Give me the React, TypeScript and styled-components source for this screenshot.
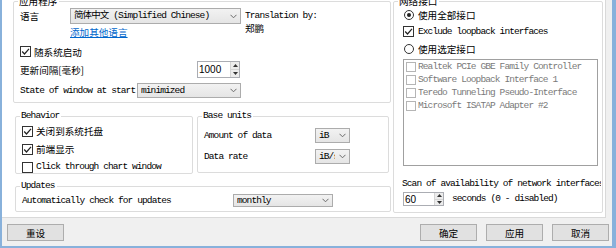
import React from "react";
import styled, { createGlobalStyle } from "styled-components";

const MONO = `"Liberation Mono", "Noto Sans CJK SC", monospace`;
const CJK = `"Noto Sans CJK SC", "Liberation Sans", sans-serif`;
const SANS = `"Liberation Sans", Arial, sans-serif`;

const GlobalStyle = createGlobalStyle`
  html, body { margin: 0; padding: 0; width: 616px; height: 248px; overflow: hidden; background: #fff; }
  * { box-sizing: border-box; }
`;

const Window = styled.div`
  width: 616px;
  height: 248px;
  background: #88b1db;
  padding: 0 4px 2px 2px;
  display: flex;
  flex-direction: column;
`;

const Client = styled.div`
  flex: 1;
  background: #f0f0f0;
  display: flex;
  flex-direction: column;
`;

const TabPage = styled.div`
  width: 604px;
  height: 218px;
  flex-shrink: 0;
  background: #fff;
  border-right: 1px solid #d9d9d9;
  border-bottom: 1px solid #d9d9d9;
  overflow: hidden;
  display: flex;
  align-items: flex-start;
  padding: 1px 0 0 11px;
  color: #000;
`;

const LeftCol = styled.div`
  width: 378px;
  display: flex;
  flex-direction: column;
  flex-shrink: 0;
`;

const GroupBox = styled.div<{ $w: number; $h: number; $ml?: number; $mt?: number }>`
  position: relative;
  width: ${(p) => p.$w}px;
  height: ${(p) => p.$h}px;
  margin-left: ${(p) => p.$ml ?? 0}px;
  margin-top: ${(p) => p.$mt ?? 0}px;
  border: 1px solid #dcdcdc;
  border-radius: 2px;
  flex-shrink: 0;
`;

const Caption = styled.span<{ $cjk?: boolean }>`
  position: absolute;
  top: -7px;
  left: 4px;
  padding: 0 2px 0 1px;
  background: #fff;
  line-height: 12px;
  white-space: nowrap;
  font-family: ${(p) => (p.$cjk ? CJK : MONO)};
  font-size: ${(p) => (p.$cjk ? "9.6px" : "9.5px")};
  letter-spacing: ${(p) => (p.$cjk ? "0" : "-0.9px")};
`;

const Text = styled.span<{ $cjk?: boolean; $w?: number; $color?: string }>`
  font-family: ${(p) => (p.$cjk ? CJK : MONO)};
  font-size: ${(p) => (p.$cjk ? "9.6px" : "9.5px")};
  letter-spacing: ${(p) => (p.$cjk ? "0" : "-0.9px")};
  color: ${(p) => p.$color ?? "#000"};
  white-space: nowrap;
  line-height: 12px;
  ${(p) => (p.$w ? `width: ${p.$w}px; flex-shrink: 0;` : "")}
`;

/* ---------- App group ---------- */
const AppContent = styled.div`
  padding: 6px 0 0 6px;
  display: flex;
  flex-direction: column;
`;

const TopRow = styled.div`
  display: flex;
  align-items: flex-start;
`;

const LangCol = styled.div`
  display: flex;
  flex-direction: column;
`;

const Row = styled.div<{ $h: number; $mt?: number; $gap?: number }>`
  display: flex;
  align-items: center;
  height: ${(p) => p.$h}px;
  margin-top: ${(p) => p.$mt ?? 0}px;
  gap: ${(p) => p.$gap ?? 0}px;
`;

const Link = styled.a`
  margin: 3px 0 0 50px;
  font-family: ${CJK};
  font-size: 9.6px;
  line-height: 11px;
  color: #0066cc;
  text-decoration: underline;
  white-space: nowrap;
`;

const Translation = styled.div`
  margin: 2px 0 0 4px;
  display: flex;
  flex-direction: column;
  line-height: 11px;
`;

/* ---------- controls ---------- */
const Combo = styled.div<{ $w: number; $h: number }>`
  width: ${(p) => p.$w}px;
  height: ${(p) => p.$h}px;
  flex-shrink: 0;
  display: flex;
  align-items: center;
  border: 1px solid #acacac;
  background: linear-gradient(#f2f2f2, #e5e5e5);
  padding-left: 3px;
`;

const ComboValue = styled.span`
  flex: 1;
  overflow: hidden;
  white-space: nowrap;
  font-family: ${MONO};
  font-size: 9.5px;
  letter-spacing: -0.9px;
  line-height: 12px;
  color: #000;
`;

const ComboArrow = styled.span`
  width: 14px;
  height: 100%;
  flex-shrink: 0;
  display: flex;
  align-items: center;
  justify-content: center;
`;

const Chevron = () => (
  <svg width="7" height="5" viewBox="0 0 7 5">
    <polyline points="0.5,0.8 3.5,3.8 6.5,0.8" fill="none" stroke="#6b6b6b" strokeWidth="1" />
  </svg>
);

const Spin = styled.div<{ $w: number; $h: number }>`
  width: ${(p) => p.$w}px;
  height: ${(p) => p.$h}px;
  flex-shrink: 0;
  display: flex;
  border: 1px solid #abadb3;
  background: #fff;
`;

const SpinValue = styled.span`
  flex: 1;
  padding-left: 1px;
  font-family: ${SANS};
  font-size: 10px;
  display: flex;
  align-items: center;
  color: #000;
`;

const SpinButtons = styled.div`
  width: 9px;
  display: flex;
  flex-direction: column;
  background: #ececec;
  border-left: 1px solid #d4d4d4;
`;

const SpinHalf = styled.span<{ $down?: boolean }>`
  flex: 1;
  display: flex;
  align-items: center;
  justify-content: center;
  ${(p) => (p.$down ? "border-top: 1px solid #d4d4d4;" : "")}
`;

const Tri = ({ down }: { down?: boolean }) => (
  <svg width="5" height="3" viewBox="0 0 5 3">
    <polygon points={down ? "0,0 5,0 2.5,3" : "0,3 5,3 2.5,0"} fill="#333" />
  </svg>
);

const SpinBox = ({ value, w, h }: { value: string; w: number; h: number }) => (
  <Spin $w={w} $h={h}>
    <SpinValue>{value}</SpinValue>
    <SpinButtons>
      <SpinHalf>
        <Tri />
      </SpinHalf>
      <SpinHalf $down>
        <Tri down />
      </SpinHalf>
    </SpinButtons>
  </Spin>
);

const Box = styled.span<{ $size: number; $disabled?: boolean }>`
  width: ${(p) => p.$size}px;
  height: ${(p) => p.$size}px;
  flex-shrink: 0;
  border: 1px solid ${(p) => (p.$disabled ? "#b5b5b5" : "#333")};
  background: #fff;
  display: flex;
  align-items: center;
  justify-content: center;
`;

const Check = styled.label<{ $gap?: number }>`
  display: flex;
  align-items: center;
  gap: ${(p) => p.$gap ?? 3}px;
`;

const Tick = () => (
  <svg width="9" height="9" viewBox="0 0 9 9">
    <polyline points="1.2,4.5 3.5,7 8,1.8" fill="none" stroke="#222" strokeWidth="1.2" />
  </svg>
);

const CheckBox = ({
  checked,
  children,
  size = 11,
  disabled,
  gap,
}: {
  checked?: boolean;
  children: React.ReactNode;
  size?: number;
  disabled?: boolean;
  gap?: number;
}) => (
  <Check $gap={gap}>
    <Box $size={size} $disabled={disabled}>
      {checked && <Tick />}
    </Box>
    {children}
  </Check>
);

const RadioSlot = styled.span`
  width: 11px;
  height: 11px;
  flex-shrink: 0;
  display: flex;
  align-items: center;
  justify-content: center;
`;

const RadioCircle = styled.span<{ $on?: boolean }>`
  width: 10px;
  height: 10px;
  border-radius: 50%;
  border: 1px solid #333;
  background: #fff;
  display: flex;
  align-items: center;
  justify-content: center;
  &::after {
    content: "";
    width: 4px;
    height: 4px;
    border-radius: 50%;
    background: ${(p) => (p.$on ? "#222" : "transparent")};
  }
`;

const Radio = ({ on, children }: { on?: boolean; children: React.ReactNode }) => (
  <Check $gap={4}>
    <RadioSlot>
      <RadioCircle $on={on} />
    </RadioSlot>
    {children}
  </Check>
);

/* ---------- lower left groups ---------- */
const GroupRow = styled.div`
  display: flex;
  gap: 4px;
  margin: 13px 0 0 2px;
`;

const BehaviorContent = styled.div`
  padding: 8px 0 0 6px;
  display: flex;
  flex-direction: column;
  gap: 6px;
`;

const UnitsContent = styled.div`
  padding: 11px 0 0 6px;
  display: flex;
  flex-direction: column;
  gap: 6px;
`;

const UpdatesContent = styled.div`
  padding: 7px 0 0 6px;
`;

/* ---------- right group ---------- */
const NetContent = styled.div`
  padding: 4px 0 0 9px;
  display: flex;
  flex-direction: column;
`;

const ListBox = styled.div`
  width: 195px;
  height: 107px;
  margin-top: 2px;
  border: 1px solid #a0a0a0;
  background: #fff;
  display: flex;
  flex-direction: column;
`;

const ListItem = styled.div`
  height: 13px;
  padding-left: 2px;
  display: flex;
  align-items: center;
`;

const ScanText = styled(Text)`
  display: block;
  width: 199px;
  overflow: hidden;
  margin: 12px 0 0 -1px;
`;

/* ---------- buttons ---------- */
const ButtonBar = styled.div`
  flex: 1;
  display: flex;
  align-items: flex-start;
  padding: 6px 3px 0 5px;
  gap: 9px;
`;

const Button = styled.button`
  width: 57px;
  height: 17px;
  padding: 0;
  border: 1px solid #adadad;
  background: #e1e1e1;
  font-family: ${CJK};
  font-size: 9.6px;
  line-height: 12px;
  color: #000;
`;

const Spacer = styled.span`
  flex: 1;
`;

const interfaces = [
  "Realtek PCIe GBE Family Controller",
  "Software Loopback Interface 1",
  "Teredo Tunneling Pseudo-Interface",
  "Microsoft ISATAP Adapter #2",
];

export default function App() {
  return (
    <>
      <GlobalStyle />
      <Window>
        <Client>
          <TabPage>
            <LeftCol>
              <GroupBox $w={378} $h={102}>
                <Caption $cjk>应用程序</Caption>
                <AppContent>
                  <TopRow>
                    <LangCol>
                      <Row $h={16}>
                        <Text $cjk $w={50}>语言</Text>
                        <Combo $w={171} $h={16}>
                          <ComboValue>简体中文 (Simplified Chinese)</ComboValue>
                          <ComboArrow>
                            <Chevron />
                          </ComboArrow>
                        </Combo>
                      </Row>
                      <Link>添加其他语言</Link>
                    </LangCol>
                    <Translation>
                      <Text>Translation by:</Text>
                      <Text $cjk>郑鹏</Text>
                    </Translation>
                  </TopRow>
                  <Row $h={13} $mt={7}>
                    <CheckBox checked>
                      <Text $cjk>随系统启动</Text>
                    </CheckBox>
                  </Row>
                  <Row $h={17} $mt={3}>
                    <Text $cjk $w={177}>更新间隔[毫秒]</Text>
                    <SpinBox value="1000" w={43} h={17} />
                  </Row>
                  <Row $h={15} $mt={5}>
                    <Text $w={117}>State of window at start</Text>
                    <Combo $w={104} $h={15}>
                      <ComboValue>minimized</ComboValue>
                      <ComboArrow>
                        <Chevron />
                      </ComboArrow>
                    </Combo>
                  </Row>
                </AppContent>
              </GroupBox>

              <GroupRow>
                <GroupBox $w={178} $h={58}>
                  <Caption>Behavior</Caption>
                  <BehaviorContent>
                    <CheckBox checked>
                      <Text $cjk>关闭到系统托盘</Text>
                    </CheckBox>
                    <CheckBox checked>
                      <Text $cjk>前端显示</Text>
                    </CheckBox>
                    <CheckBox>
                      <Text>Click through chart window</Text>
                    </CheckBox>
                  </BehaviorContent>
                </GroupBox>
                <GroupBox $w={192} $h={57}>
                  <Caption>Base units</Caption>
                  <UnitsContent>
                    <Row $h={15}>
                      <Text $w={111}>Amount of data</Text>
                      <Combo $w={35} $h={15}>
                        <ComboValue>iB</ComboValue>
                        <ComboArrow>
                          <Chevron />
                        </ComboArrow>
                      </Combo>
                    </Row>
                    <Row $h={15}>
                      <Text $w={111}>Data rate</Text>
                      <Combo $w={35} $h={15}>
                        <ComboValue>iB/s</ComboValue>
                        <ComboArrow>
                          <Chevron />
                        </ComboArrow>
                      </Combo>
                    </Row>
                  </UnitsContent>
                </GroupBox>
              </GroupRow>

              <GroupBox $w={376} $h={26} $ml={2} $mt={12}>
                <Caption>Updates</Caption>
                <UpdatesContent>
                  <Row $h={13}>
                    <Text $w={211}>Automatically check for updates</Text>
                    <Combo $w={100} $h={13}>
                      <ComboValue>monthly</ComboValue>
                      <ComboArrow>
                        <Chevron />
                      </ComboArrow>
                    </Combo>
                  </Row>
                </UpdatesContent>
              </GroupBox>
            </LeftCol>

            <GroupBox $w={210} $h={212} $ml={2}>
              <Caption $cjk>网络接口</Caption>
              <NetContent>
                <Row $h={17}>
                  <Radio on>
                    <Text $cjk>使用全部接口</Text>
                  </Radio>
                </Row>
                <Row $h={17}>
                  <CheckBox checked gap={4}>
                    <Text>Exclude loopback interfaces</Text>
                  </CheckBox>
                </Row>
                <Row $h={17}>
                  <Radio>
                    <Text $cjk>使用选定接口</Text>
                  </Radio>
                </Row>
                <ListBox>
                  {interfaces.map((name) => (
                    <ListItem key={name}>
                      <CheckBox size={10} disabled gap={2}>
                        <Text $color="#7a7a7a">{name}</Text>
                      </CheckBox>
                    </ListItem>
                  ))}
                </ListBox>
                <ScanText>Scan of availability of network interfaces:</ScanText>
                <Row $h={14} $mt={2} $gap={8}>
                  <SpinBox value="60" w={41} h={14} />
                  <Text>seconds (0 - disabled)</Text>
                </Row>
              </NetContent>
            </GroupBox>
          </TabPage>

          <ButtonBar>
            <Button>重设</Button>
            <Spacer />
            <Button>确定</Button>
            <Button>应用</Button>
            <Button>取消</Button>
          </ButtonBar>
        </Client>
      </Window>
    </>
  );
}
